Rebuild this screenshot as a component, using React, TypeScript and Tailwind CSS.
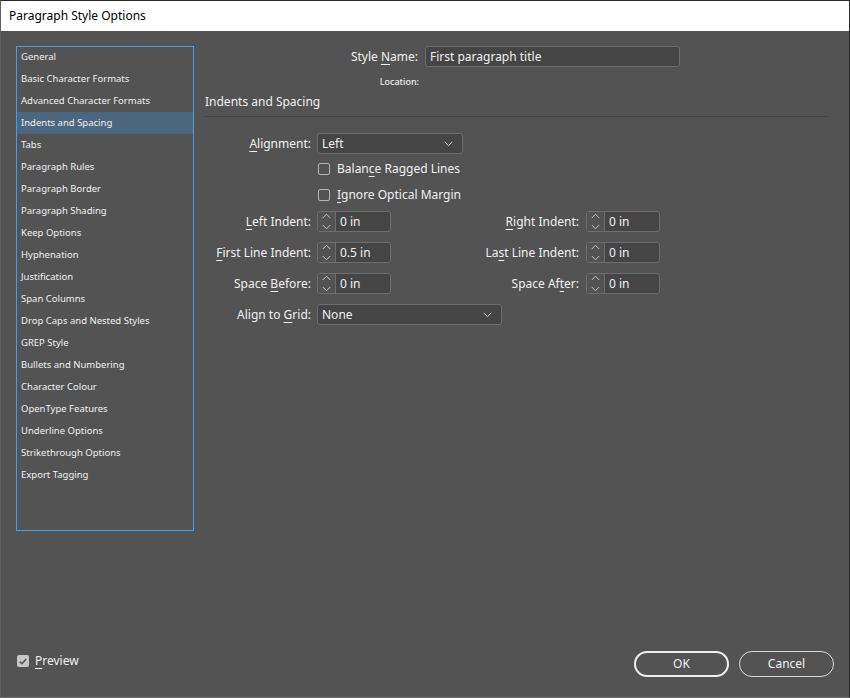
const categories = [
  'General',
  'Basic Character Formats',
  'Advanced Character Formats',
  'Indents and Spacing',
  'Tabs',
  'Paragraph Rules',
  'Paragraph Border',
  'Paragraph Shading',
  'Keep Options',
  'Hyphenation',
  'Justification',
  'Span Columns',
  'Drop Caps and Nested Styles',
  'GREP Style',
  'Bullets and Numbering',
  'Character Colour',
  'OpenType Features',
  'Underline Options',
  'Strikethrough Options',
  'Export Tagging',
]

function Key({ children }: { children: React.ReactNode }) {
  return <span className="underline decoration-1 underline-offset-[3px]">{children}</span>
}

function Chevron() {
  return (
    <svg width="9" height="6" viewBox="0 0 9 6" fill="none" stroke="#d0d0d0" strokeWidth="1">
      <path d="M0.8 1 L4.5 4.6 L8.2 1" />
    </svg>
  )
}

function Select({ value, className }: { value: string; className: string }) {
  return (
    <div className={`h-[21px] pl-1 pr-[9px] flex items-center justify-between rounded-[3px] border border-[#6e6e6e] bg-[#454545] text-[#f0f0f0] ${className}`}>
      <span>{value}</span>
      <Chevron />
    </div>
  )
}

function Stepper({ value }: { value: string }) {
  return (
    <div className="w-[74px] h-[21px] flex rounded-[3px] border border-[#6e6e6e] bg-[#454545] text-[#f0f0f0]">
      <div className="w-[18px] shrink-0 flex flex-col items-center justify-center gap-[5px] border-r border-[#6e6e6e] bg-[#535353] rounded-l-[3px]">
        <svg width="9" height="6" viewBox="0 0 9 6" fill="none" stroke="#c4c4c4" strokeWidth="1">
          <path d="M0.8 5 L4.5 1.2 L8.2 5" />
        </svg>
        <svg width="9" height="6" viewBox="0 0 9 6" fill="none" stroke="#c4c4c4" strokeWidth="1">
          <path d="M0.8 1 L4.5 4.8 L8.2 1" />
        </svg>
      </div>
      <span className="pl-[4px] leading-[19px]">{value}</span>
    </div>
  )
}

function Check({ children }: { children: React.ReactNode }) {
  return (
    <div className="flex items-center h-[16px] ml-[1px]">
      <div className="w-[12px] h-[12px] rounded-[2px] border border-[#b4b4b4]" />
      <span className="ml-[7px] text-[#f0f0f0]">{children}</span>
    </div>
  )
}

function IndentRow({ left, leftValue, right, rightValue }: { left: React.ReactNode; leftValue: string; right: React.ReactNode; rightValue: string }) {
  return (
    <div className="flex items-center h-[21px]">
      <div className="w-[107px] text-right whitespace-nowrap">{left}</div>
      <div className="ml-[6px]"><Stepper value={leftValue} /></div>
      <div className="w-[188px] text-right whitespace-nowrap">{right}</div>
      <div className="ml-[7px]"><Stepper value={rightValue} /></div>
    </div>
  )
}

export default function App() {
  return (
    <div className="w-[850px] h-[698px] flex flex-col overflow-hidden bg-[#535353] border-t border-l border-b border-r border-t-[#2a2a2a] border-l-[#606060] border-b-[#6f6f6f] border-r-[#2a2a2a] text-[12px] text-[#f0f0f0] font-['Noto_Sans','Open_Sans',sans-serif]">
      <div className="h-[30px] shrink-0 flex items-center pl-[8px] bg-white text-black text-[12px]">
        Paragraph Style Options
      </div>

      <div className="flex flex-1 pt-[15px] pl-[15px] min-h-0">
        <div className="w-[178px] h-[485px] shrink-0 border border-[#4a9be8] text-[9.5px]">
          <div className="-mt-px">
            {categories.map((name) => (
              <div
                key={name}
                className={`h-[22px] pl-[4px] flex items-center whitespace-nowrap ${name === 'Indents and Spacing' ? 'bg-[#4b6780]' : ''}`}
              >
                {name}
              </div>
            ))}
          </div>
        </div>

        <div className="w-[625px] ml-[10px]">
          <div className="flex items-center h-[21px]">
            <div className="w-[214px] text-right">Style <Key>N</Key>ame:</div>
            <div className="ml-[7px] w-[255px] h-[21px] pl-[4px] rounded-[3px] border border-[#6e6e6e] bg-[#454545] leading-[19px]">
              First paragraph title
            </div>
          </div>
          <div className="mt-[7px] h-[16px] w-[215px] text-right text-[9px] font-medium leading-[16px]">Location:</div>
          <div className="mt-px ml-[1px] h-[22px] leading-[22px]">Indents and Spacing</div>
          <div className="mt-[3px] h-px bg-[#474747]" />

          <div className="mt-[16px] flex items-center h-[21px]">
            <div className="w-[107px] text-right"><Key>A</Key>lignment:</div>
            <Select value="Left" className="ml-[6px] w-[146px]" />
          </div>
          <div className="mt-[7px] ml-[113px] flex flex-col gap-[10px]">
            <Check>Balan<Key>c</Key>e Ragged Lines</Check>
            <Check><Key>I</Key>gnore Optical Margin</Check>
          </div>

          <div className="mt-[8px] flex flex-col gap-[10px]">
            <IndentRow left={<><Key>L</Key>eft Indent:</>} leftValue="0 in" right={<><Key>R</Key>ight Indent:</>} rightValue="0 in" />
            <IndentRow left={<><Key>F</Key>irst Line Indent:</>} leftValue="0.5 in" right={<>La<Key>s</Key>t Line Indent:</>} rightValue="0 in" />
            <IndentRow left={<>Space <Key>B</Key>efore:</>} leftValue="0 in" right={<>Space Af<Key>t</Key>er:</>} rightValue="0 in" />
            <div className="flex items-center h-[21px]">
              <div className="w-[107px] text-right">Align to <Key>G</Key>rid:</div>
              <Select value="None" className="ml-[6px] w-[185px]" />
            </div>
          </div>
        </div>
      </div>

      <div className="h-[64px] shrink-0 flex pl-[16px] pr-[15px] pt-[18px]">
        <div className="flex items-center h-[16px] mt-[2px]">
          <div className="w-[12px] h-[12px] rounded-[2px] bg-[#c6c6c6] flex items-center justify-center">
            <svg width="8" height="7" viewBox="0 0 8 7" fill="none" stroke="#5a5a5a" strokeWidth="1.6">
              <path d="M0.8 3.6 L3 5.7 L7.2 1" />
            </svg>
          </div>
          <span className="ml-[6px]"><Key>P</Key>review</span>
        </div>
        <div className="ml-auto flex gap-[10px]">
          <div className="w-[95px] h-[26px] rounded-full border-2 border-[#f0f0f0] flex items-center justify-center">OK</div>
          <div className="w-[95px] h-[26px] rounded-full border border-[#d8d8d8] flex items-center justify-center">Cancel</div>
        </div>
      </div>
    </div>
  )
}
